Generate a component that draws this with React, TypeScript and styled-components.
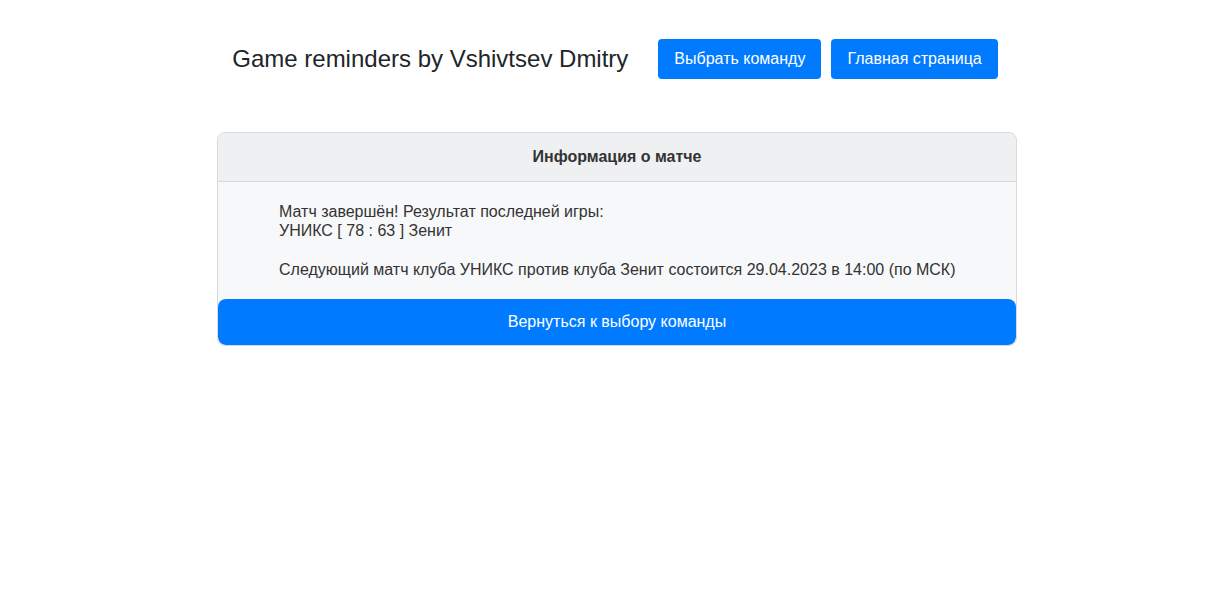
import styled, { createGlobalStyle } from 'styled-components';

const GlobalStyle = createGlobalStyle`
  body {
    margin: 0;
    background: #fff;
    font-family: "Liberation Sans", Arial, sans-serif;
    color: #212529;
  }
`;

const Page = styled.div`
  display: flex;
  flex-direction: column;
  align-items: center;
  padding: 39px 0 0 16px;
`;

const Header = styled.header`
  display: flex;
  align-items: center;
  gap: 30px;
  margin-right: 4px;
`;

const Title = styled.h1`
  margin: 0;
  font-size: 24px;
  font-weight: 400;
  line-height: 1.2;
`;

const Nav = styled.nav`
  display: flex;
  gap: 10px;
`;

const Button = styled.button<{ $block?: boolean }>`
  font-family: inherit;
  font-size: 16px;
  line-height: 24px;
  color: #fff;
  background: #007bff;
  border: none;
  border-radius: ${p => (p.$block ? '8px' : '4px')};
  padding: ${p => (p.$block ? '11px 16px' : '8px 16px')};
  width: ${p => (p.$block ? '100%' : 'auto')};
  cursor: pointer;
`;

const Card = styled.section`
  width: 800px;
  margin-top: 53px;
  background: #f7f8fa;
  border: 1px solid #d9dadc;
  border-radius: 8px;
  overflow: hidden;
  box-sizing: border-box;
`;

const CardHeader = styled.div`
  background: #eff0f2;
  border-bottom: 1px solid #d9dadc;
  padding: 12px 20px;
  line-height: 24px;
  font-size: 16px;
  font-weight: 700;
  text-align: center;
  color: #333;
`;

const CardBody = styled.div`
  padding: 20px 20px 20px 61px;
  font-size: 16px;
  line-height: 19px;
  color: #333;
`;

const Gap = styled.div`
  height: 20px;
`;

export default function App() {
  return (
    <>
      <GlobalStyle />
      <Page>
        <Header>
          <Title>Game reminders by Vshivtsev Dmitry</Title>
          <Nav>
            <Button>Выбрать команду</Button>
            <Button>Главная страница</Button>
          </Nav>
        </Header>
        <Card>
          <CardHeader>Информация о матче</CardHeader>
          <CardBody>
            Матч завершён! Результат последней игры:
            <br />
            УНИКС [ 78 : 63 ] Зенит
            <Gap />
            Следующий матч клуба УНИКС против клуба Зенит состоится 29.04.2023 в 14:00 (по МСК)
          </CardBody>
          <Button $block>Вернуться к выбору команды</Button>
        </Card>
      </Page>
    </>
  );
}
